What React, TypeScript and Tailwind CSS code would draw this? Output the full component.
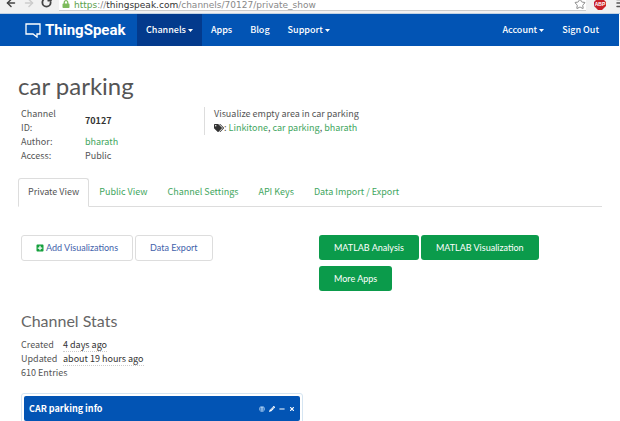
import { ArrowLeft, ArrowRight, Menu, RotateCw, Star } from 'lucide-react'
import { FaGlobe, FaLock, FaMinus, FaPencilAlt, FaPlusSquare, FaTags, FaTimes } from 'react-icons/fa'

const tabs = ['Public View', 'Channel Settings', 'API Keys', 'Data Import / Export']
const tags = ['Linkitone', 'car parking', 'bharath']

function Caret() {
  return (
    <svg width="5" height="3" viewBox="0 0 5 3" fill="currentColor">
      <path d="M0 0h5L2.5 3z" />
    </svg>
  )
}

function BrowserBar() {
  return (
    <div className="flex h-[14px] items-start border-b border-[#c3d3e3] bg-[#f1f1f1]">
      <div className="flex w-[59px] shrink-0 items-start gap-[6px] pl-[5px] text-[#444]">
        <button aria-label="Back"><ArrowLeft size={12} strokeWidth={3} className="-mt-[3px]" /></button>
        <button aria-label="Forward"><ArrowRight size={12} strokeWidth={3} className="-mt-[3px] text-[#ccc]" /></button>
        <button aria-label="Reload"><RotateCw size={11} strokeWidth={4} className="-mt-[3px]" /></button>
      </div>
      <div className="flex h-[11px] flex-1 items-start gap-1 border-b border-[#ccc] bg-white pl-[3px]">
        <FaLock size={8} className="text-[#7dbb5c]" />
        <p className="flex-1 font-['DejaVu_Sans',sans-serif] text-[9px] leading-[10px] text-[#888]">
          <span className="text-[#5a9e4b]">https</span>://<span className="text-[#333]">thingspeak.com</span>/channels/70127/private_show
        </p>
        <button aria-label="Bookmark"><Star size={12} strokeWidth={2} className="-mt-[2px] text-[#888]" /></button>
      </div>
      <div className="flex w-[34px] shrink-0 items-start gap-[9px] overflow-hidden pl-2">
        <button aria-label="Ad blocker" className="shrink-0">
          <svg width="12" height="12" viewBox="0 0 12 12" className="-mt-[2px]">
            <path d="M4 0h4l4 4v4l-4 4H4L0 8V4z" fill="#c91f28" />
            <text x="6" y="8" fontSize="5" fontWeight="700" fill="#fff" textAnchor="middle" fontFamily="Liberation Sans">ABP</text>
          </svg>
        </button>
        <button aria-label="Menu" className="shrink-0"><Menu size={12} strokeWidth={3} className="-mt-[3px] text-[#555]" /></button>
      </div>
    </div>
  )
}

function Navbar() {
  return (
    <nav className="mr-px flex h-8 items-stretch bg-[#0254b4] text-[9px] font-medium text-white">
      <a href="#" className="ml-[25px] flex w-[112px] items-center gap-1 font-['Roboto',sans-serif] text-[15px] font-bold">
        <svg width="16" height="16" viewBox="0 0 16 16" fill="none" stroke="currentColor" strokeWidth="1.3">
          <path d="M1 2h14v10h-3v3l-4-3H1z" />
        </svg>
        ThingSpeak
      </a>
      <a href="#" className="flex items-center gap-[2px] bg-[#033a8c] px-[9px]">Channels <Caret /></a>
      <a href="#" className="flex items-center px-[9px]">Apps</a>
      <a href="#" className="flex items-center px-[9px]">Blog</a>
      <a href="#" className="flex items-center gap-[2px] px-[9px]">Support <Caret /></a>
      <a href="#" className="ml-auto flex items-center gap-[2px] px-[9px]">Account <Caret /></a>
      <a href="#" className="mr-[11px] flex items-center px-[9px]">Sign Out</a>
    </nav>
  )
}

const lightButton = "h-[26px] rounded-[3px] border border-[#ddd] px-[14px] text-[#3f62ab]"
const greenButton = "h-[25px] rounded-[3px] bg-[#0b9b4b] px-[15px] text-white"

export default function App() {
  return (
    <div className="h-screen overflow-hidden bg-white font-['Noto_Sans_CJK_SC',sans-serif] text-[9px] leading-[14px] text-[#555]">
      <BrowserBar />
      <Navbar />

      <main className="px-[18px] pt-6">
        <h1 className="font-['Lato',sans-serif] text-[24px] leading-8 text-[#555]">car parking</h1>

        {/* Channel info */}
        <div className="mt-[5px] flex items-start">
          <table className="w-[186px] shrink-0 table-fixed text-left">
            <tbody>
              <tr>
                <th className="w-[67px] pl-[3px] pr-6 font-normal">Channel ID:</th>
                <td className="font-bold text-[#333]">70127</td>
              </tr>
              <tr>
                <th className="pl-[3px] font-normal">Author:</th>
                <td><a href="#" className="text-[#3fa660]">bharath</a></td>
              </tr>
              <tr>
                <th className="pl-[3px] font-normal">Access:</th>
                <td>Public</td>
              </tr>
            </tbody>
          </table>
          <div className="border-l border-[#ddd] pl-[9px]">
            <p>Visualize empty area in car parking</p>
            <p className="flex items-center">
              <FaTags size={10} className="text-[#333]" />
              <span>
                :{' '}
                {tags.map((tag, i) => (
                  <span key={tag}>
                    {i > 0 && ', '}
                    <a href="#" className="text-[#3fa660]">{tag}</a>
                  </span>
                ))}
              </span>
            </p>
          </div>
        </div>

        {/* Tabs */}
        <div className="mt-[15px] flex border-b border-[#ddd]">
          <a href="#" className="-mb-px rounded-t-[3px] border border-b-white border-[#ddd] px-[9px] py-[6px]">Private View</a>
          {tabs.map(tab => (
            <a key={tab} href="#" className="px-[10px] py-[7px] text-[#3fa660]">{tab}</a>
          ))}
        </div>

        {/* Actions */}
        <div className="mt-7 flex items-start pl-[3px] font-['Lato',sans-serif]">
          <div className="flex w-[298px] shrink-0 gap-[2px]">
            <button className={`${lightButton} flex items-center gap-[2px]`}>
              <FaPlusSquare size={8} className="text-[#14a03c]" />
              Add Visualizations
            </button>
            <button className={lightButton}>Data Export</button>
          </div>
          <div className="flex max-w-[240px] flex-wrap gap-x-[2px] gap-y-[6px]">
            <button className={greenButton}>MATLAB Analysis</button>
            <button className={greenButton}>MATLAB Visualization</button>
            <button className={greenButton}>More Apps</button>
          </div>
        </div>

        {/* Stats */}
        <section className="mt-5 pl-[3px]">
          <h2 className="font-['Lato',sans-serif] text-[16px] leading-5 text-[#666]">Channel Stats</h2>
          <dl className="mt-[7px] grid grid-cols-[42px_1fr]">
            <dt>Created</dt>
            <dd><span className="border-b border-dotted border-[#ccc] text-[#333]">4 days ago</span></dd>
            <dt>Updated</dt>
            <dd><span className="border-b border-dotted border-[#ccc] text-[#333]">about 19 hours ago</span></dd>
          </dl>
          <p>610 Entries</p>

          <div className="mt-[13px] w-[282px] rounded-[3px] border border-[#d5e5f2] p-[2px]">
            <div className="flex h-[25px] items-center rounded-[2px] bg-[#0254b4] px-[5px] text-white">
              <h3 className="flex-1 font-bold">CAR parking info</h3>
              <div className="flex items-center gap-1">
                <button aria-label="Open channel"><FaGlobe size={6} className="text-[#a9cdf2]" /></button>
                <button aria-label="Edit"><FaPencilAlt size={6} /></button>
                <button aria-label="Minimize"><FaMinus size={6} /></button>
                <button aria-label="Close"><FaTimes size={6} /></button>
              </div>
            </div>
          </div>
        </section>
      </main>
    </div>
  )
}
